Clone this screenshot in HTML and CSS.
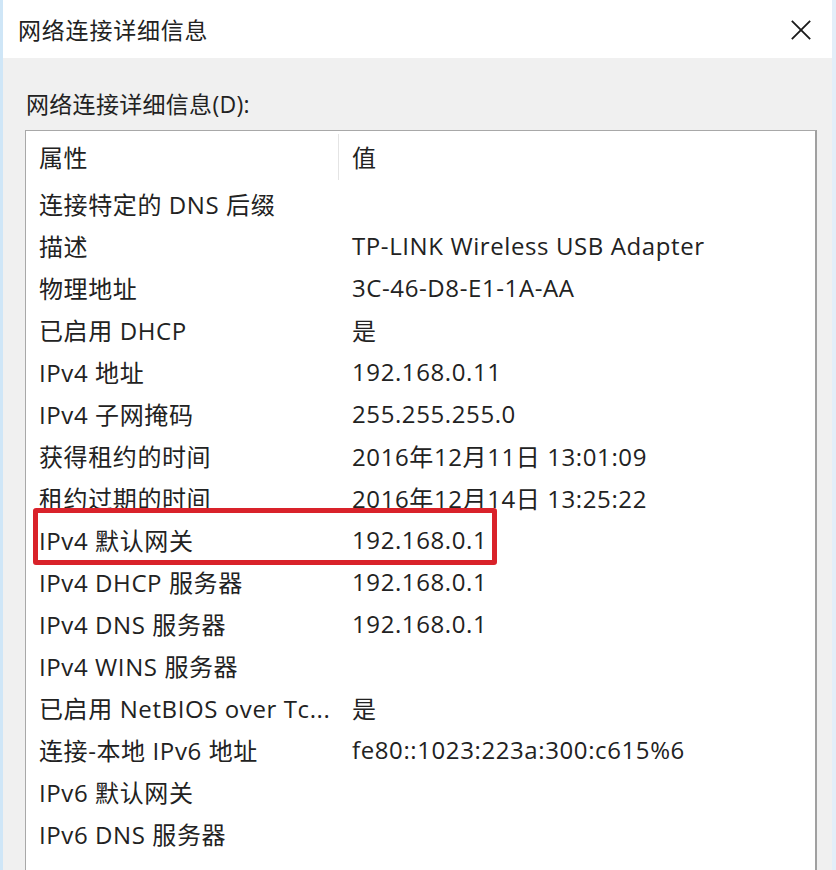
FILE: index.html
```html
<!DOCTYPE html>
<html lang="zh-CN">
<head>
<meta charset="utf-8">
<title>网络连接详细信息</title>
<link rel="stylesheet" href="styles.css">
</head>
<body>
<div class="window">
  <div class="titlebar">
    <span class="title">网络连接详细信息</span>
    <svg class="close" width="24" height="24" viewBox="0 0 24 24"><path d="M2 2 L22 22 M22 2 L2 22" stroke="#1a1a1a" stroke-width="2" fill="none"/></svg>
  </div>
  <div class="panel">
    <div class="label">网络连接详细信息(D):</div>
    <div class="list">
      <div class="head">
        <div class="hcell name">属性</div>
        <div class="hcell value">值</div>
      </div>
      <div class="row"><span class="name">连接特定的 DNS 后缀</span><span class="value"></span></div>
      <div class="row"><span class="name">描述</span><span class="value">TP-LINK Wireless USB Adapter</span></div>
      <div class="row"><span class="name">物理地址</span><span class="value">3C-46-D8-E1-1A-AA</span></div>
      <div class="row"><span class="name">已启用 DHCP</span><span class="value">是</span></div>
      <div class="row"><span class="name">IPv4 地址</span><span class="value">192.168.0.11</span></div>
      <div class="row"><span class="name">IPv4 子网掩码</span><span class="value">255.255.255.0</span></div>
      <div class="row"><span class="name">获得租约的时间</span><span class="value">2016年12月11日 13:01:09</span></div>
      <div class="row"><span class="name">租约过期的时间</span><span class="value">2016年12月14日 13:25:22</span></div>
      <div class="row marked"><span class="name">IPv4 默认网关</span><span class="value">192.168.0.1</span><span class="highlight"></span></div>
      <div class="row"><span class="name">IPv4 DHCP 服务器</span><span class="value">192.168.0.1</span></div>
      <div class="row"><span class="name">IPv4 DNS 服务器</span><span class="value">192.168.0.1</span></div>
      <div class="row"><span class="name">IPv4 WINS 服务器</span><span class="value"></span></div>
      <div class="row"><span class="name">已启用 NetBIOS over Tc...</span><span class="value">是</span></div>
      <div class="row"><span class="name">连接-本地 IPv6 地址</span><span class="value">fe80::1023:223a:300:c615%6</span></div>
      <div class="row"><span class="name">IPv6 默认网关</span><span class="value"></span></div>
      <div class="row"><span class="name">IPv6 DNS 服务器</span><span class="value"></span></div>
    </div>
  </div>
</div>
</body>
</html>
```

FILE: styles.css
```css
html, body {
  margin: 0;
  padding: 0;
  height: 100%;
  overflow: hidden;
}
body {
  font-family: "Open Sans", "Noto Sans CJK SC", sans-serif;
  color: #222222;
  background: #f0f0f0;
}
.window {
  height: 870px;
  display: flex;
  flex-direction: column;
  border-left: 3px solid #cfe6f7;
  border-right: 4px solid #e3eef9;
  box-sizing: border-box;
}
.titlebar {
  height: 58px;
  background: #ffffff;
  display: flex;
  align-items: center;
  justify-content: space-between;
  padding: 0 20px 0 15px;
  flex: none;
}
.title {
  font-size: 23px;
  letter-spacing: 0.8px;
}
.close {
  width: 22px;
  height: 22px;
  margin-top: 2px;
}
.panel {
  flex: 1;
  background: #f0f0f0;
  padding: 30px 15px 0 22px;
  display: flex;
  flex-direction: column;
  min-height: 0;
}
.label {
  font-size: 23px;
  line-height: 32px;
  margin: 0 0 10px 0;
  padding-left: 1px;
  letter-spacing: 0.3px;
}
.list {
  flex: 1;
  background: #ffffff;
  border: 1px solid #a8a8a8;
  border-bottom: none;
  border-right: 2px solid #a0a0a0;
  font-size: 24px;
  letter-spacing: 0.6px;
}
.head {
  display: flex;
  height: 51px;
  align-items: center;
}
.hcell {
  height: 46px;
  display: flex;
  align-items: center;
}
.hcell.name {
  border-right: 1px solid #e4e4e4;
}
.row {
  display: flex;
  height: 42px;
  align-items: center;
  position: relative;
}
.name {
  width: 313px;
  padding-left: 13px;
  box-sizing: border-box;
  white-space: nowrap;
  flex: none;
}
.value {
  padding-left: 13px;
  white-space: nowrap;
}
.highlight {
  position: absolute;
  left: 7px;
  top: -10px;
  width: 464px;
  height: 57px;
  border: 5px solid #d9222a;
  border-radius: 3px;
  box-sizing: border-box;
}
```
